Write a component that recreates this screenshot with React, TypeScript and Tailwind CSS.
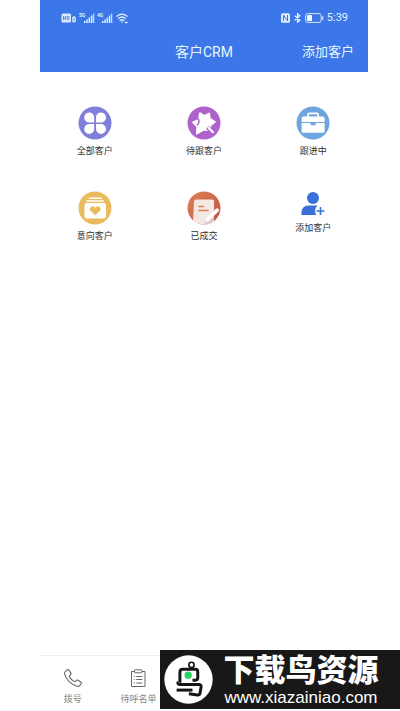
import React from 'react';

const CloverIcon = () => (
  <svg viewBox="0 0 34 34" className="h-[34px] w-[34px]">
    <circle cx="17" cy="17" r="16.5" fill="#7f7edb" />
    <g fill="#fff">
      <path d="M16.2 16.4h-4.6a5 5 0 1 1 4.6-5z" />
      <path d="M18 16.4h4.6a5 5 0 1 0-4.6-5z" />
      <path d="M16.2 18h-4.6a5 5 0 1 0 4.6 5z" />
      <path d="M18 18h4.6a5 5 0 1 1-4.6 5z" />
    </g>
  </svg>
);

const StarIcon = () => (
  <svg viewBox="0 0 34 34" className="h-[34px] w-[34px]">
    <circle cx="17" cy="17" r="16.5" fill="#ae62cc" />
    <path
      d="M13 7l4.300 2.800L22.300 7.400l.6 5.300 5 3.300-4.200 3-1 5.500-6-.8-7 4.200.5-7.200-4.300-4.400 5.500-2.200z"
      fill="#fff"
      stroke="#fff"
      strokeWidth="1.600"
      strokeLinejoin="round"
    />
    <path d="M10.500 12q3 3 0 7" fill="none" stroke="#ae62cc" strokeWidth="1.500" strokeLinecap="round" />
    <path d="M20.500 21.500l7 6.500" stroke="#ae62cc" strokeWidth="4.200" />
    <path d="M21.800 22l4.200 4.200" stroke="#fff" strokeWidth="2.200" strokeLinecap="round" />
  </svg>
);

const BriefcaseIcon = () => (
  <svg viewBox="0 0 34 34" className="h-[34px] w-[34px]">
    <circle cx="17" cy="17" r="16.5" fill="#6fa5df" />
    <path d="M12 11V9a1.600 1.600 0 0 1 1.600-1.600h7A1.600 1.600 0 0 1 22.200 9v2" fill="none" stroke="#fff" strokeWidth="1.700" />
    <path d="M7.600 10.500h19a2 2 0 0 1 2 2V16H5.600v-3.500a2 2 0 0 1 2-2z" fill="#fff" />
    <path d="M5.600 17h9v2.200h5V17h9v8.200a1.600 1.600 0 0 1-1.600 1.600H7.200a1.600 1.600 0 0 1-1.600-1.600z" fill="#fff" />
    <path d="M15.500 16h3.200v2.300h-3.200z" fill="#6fa5df" />
  </svg>
);

const HeartCardIcon = () => (
  <svg viewBox="0 0 34 34" className="h-[34px] w-[34px]">
    <circle cx="17" cy="17" r="16.5" fill="#e9bb5e" />
    <path d="M11.500 7.300h12M9 10h16.500" stroke="#fff" strokeWidth="1.500" strokeLinecap="round" />
    <rect x="6.500" y="12" width="21.500" height="15.500" rx="2" fill="#fff" />
    <path
      d="M17.200 24.300l-4.500-4.200a2.700 2.700 0 0 1 0-3.900 2.800 2.800 0 0 1 3.900 0l.6.6.6-.6a2.800 2.800 0 0 1 3.900 0 2.700 2.700 0 0 1 0 3.900z"
      fill="#e9bb5e"
    />
  </svg>
);

const ContractIcon = () => (
  <svg viewBox="0 0 34 34" className="h-[34px] w-[34px]">
    <defs>
      <linearGradient id="deal" x1="0" y1="0" x2="1" y2="1">
        <stop offset="0" stopColor="#df8150" />
        <stop offset="1" stopColor="#bd5347" />
      </linearGradient>
      <clipPath id="dealClip">
        <circle cx="17" cy="17" r="16.5" />
      </clipPath>
    </defs>
    <g clipPath="url(#dealClip)">
      <rect width="34" height="34" fill="url(#deal)" />
      <path d="M9 8.500h16a2 2 0 0 1 2 2v21a3 3 0 0 1-3 2.500H10a4 4 0 0 1-4-4l1-19.500a2 2 0 0 1 2-2z" fill="#f4e8e5" />
      <path d="M20 28l7-6v9l-3 3h-7z" fill="#dccdca" />
      <path d="M12 15.500h4.500M12 19.500h9" stroke="#df7c52" strokeWidth="1.500" strokeLinecap="round" />
    </g>
    <path d="M20.200 28.500l10-9.300" stroke="#fff" strokeWidth="3.800" strokeLinecap="round" />
  </svg>
);

const AddUserIcon = () => (
  <svg viewBox="0 0 26 26" className="h-[26px] w-[26px]" fill="#3a70d8">
    <circle cx="13" cy="7" r="6" />
    <path d="M1.500 24v-3.500A6.500 6.500 0 0 1 8 14.500h9.500q-2.500 2.500-2.500 5t1.300 4.500z" />
    <path d="M20.500 16v8M16.500 20h8" stroke="#3a70d8" strokeWidth="1.600" />
  </svg>
);

const Signal = ({ label }: { label: string }) => (
  <svg viewBox="0 0 16 12" className="h-3 w-4" fill="#e2f3ff">
    <text x="0" y="4.500" fontSize="5" fontFamily="Roboto, sans-serif" fontWeight="700">{label}</text>
    <path d="M5 9h1.500v2H5zM7.300 7.500h1.500V11H7.300zM9.600 5.500h1.500V11H9.600zM11.900 3.500h1.500V11h-1.500zM14.200 1.500h1V11h-1z" />
  </svg>
);

const StatusBar = () => (
  <div className="flex h-9 items-center justify-between pl-[21px] pr-5">
    <div className="flex items-center gap-[2px]">
      <svg viewBox="0 0 16 10" className="h-[10px] w-4">
        <rect x=".5" y=".5" width="9.500" height="9" rx="1.500" fill="#d9edff" />
        <path d="M2.500 3v4M2.500 5h2M4.500 3v4M6.300 3.200v3.600h.5q1.400 0 1.400-1.800T6.800 3.200z" fill="none" stroke="#3b77e6" strokeWidth=".8" />
        <rect x="11.200" y="3.200" width="3.600" height="6.300" rx="1.600" fill="#d9edff" />
        <path d="M13 5v3" stroke="#3b77e6" strokeWidth=".8" />
      </svg>
      <Signal label="5G" />
      <Signal label="4G" />
      <svg viewBox="0 0 14 12" className="h-3 w-[14px]" fill="none" stroke="#e2f3ff" strokeWidth="1.300" strokeLinecap="round">
        <path d="M2 4.200q5-4.200 10 0M3.600 6.400q3.400-2.800 6.800 0M5.200 8.500q1.800-1.500 3.600 0" />
        <circle cx="7" cy="10.200" r=".7" fill="#e2f3ff" stroke="none" />
        <path d="M10.500 10.500h1.500" />
      </svg>
    </div>
    <div className="flex items-center gap-[3px]">
      <svg viewBox="0 0 9 10" className="h-[10px] w-[9px]">
        <rect width="9" height="9.500" y=".3" rx="1.500" fill="#d9edff" />
        <path d="M2.500 8V2.200l4 5.600V2" fill="none" stroke="#3b77e6" strokeWidth="1" />
      </svg>
      <svg viewBox="0 0 9 10" className="h-[10px] w-[9px]" fill="none" stroke="#e6f5ff" strokeWidth="1.200">
        <path d="M1.800 2.800l5 4.400L4.500 9.300V.7l2.300 2.100-5 4.400" />
      </svg>
      <svg viewBox="0 0 19 10" className="h-[10px] w-[19px]">
        <rect x=".6" y=".6" width="15.500" height="8.800" rx="2" fill="none" stroke="#d9edff" strokeWidth="1" />
        <rect x="2" y="2" width="5" height="6" rx=".8" fill="#f4fbff" />
        <path d="M17.700 3.200v3.600" stroke="#d9edff" strokeWidth="1.200" />
      </svg>
      <span className="font-['Roboto',sans-serif] text-[11px] leading-4 text-[#e6f5ff]">5:39</span>
    </div>
  </div>
);

const PhoneIcon = () => (
  <svg viewBox="0 0 20 20" className="h-5 w-5" fill="none" stroke="#666" strokeWidth="1.100" strokeLinejoin="round">
    <path d="M2.200 3.600l2-1.800q1-.7 1.700.3l2 3q.6 1-.3 1.700l-1 .8q-.6.600 0 1.500 1.700 2.600 4.300 4.300.9.600 1.500 0l.9-1q.8-.8 1.700-.2l3 2q.9.700.2 1.600l-1.600 1.900q-.9.900-2.400.6-4.300-1-8-4.700T1.600 5.900q-.3-1.400.6-2.300z" />
  </svg>
);

const ClipboardIcon = () => (
  <svg viewBox="0 0 20 20" className="h-5 w-5" fill="none" stroke="#666" strokeWidth="1">
    <path d="M6.500 3.500h-3v15h13.500v-15h-3" />
    <rect x="6.500" y="1.800" width="7.500" height="3" rx=".6" />
    <path d="M5.800 8.500h1M8.300 8.500h6M5.800 11.500h1M8.300 11.500h6M5.800 15h1M8.300 15h6" />
  </svg>
);

const BirdLogo = () => (
  <svg viewBox="0 0 148 148" className="h-[49px] w-[49px] shrink-0">
    <circle cx="74" cy="74" r="73" fill="#fff" />
    <g fill="none" stroke="#151515" strokeWidth="9" strokeLinejoin="round">
      <circle cx="83" cy="30" r="8" strokeWidth="5" />
      <path d="M48 84V52q0-9 9-9h38q7 0 7 8v18q0 7-7 7h-9" />
      <path d="M43 84h-1q0 5 6 5h57q8 0 7 8l-3 17q-1 8-8 7l-26-4" />
      <path d="M38 106h48" />
    </g>
    <circle cx="73" cy="61" r="11" fill="#2bd35c" />
  </svg>
);

const menu = [
  { label: '全部客户', icon: CloverIcon },
  { label: '待跟客户', icon: StarIcon },
  { label: '跟进中', icon: BriefcaseIcon },
  { label: '意向客户', icon: HeartCardIcon },
  { label: '已成交', icon: ContractIcon },
  { label: '添加客户', icon: AddUserIcon }
];

const tabs = [
  { label: '拨号', icon: PhoneIcon },
  { label: '待呼名单', icon: ClipboardIcon }
];

const App: React.FC = () => {
  return (
    <div className="relative min-h-screen bg-white font-['Roboto','Noto_Sans_CJK_SC',sans-serif]">
      <div className="ml-10 mr-8 flex min-h-screen flex-col">
        <header className="h-[72px] bg-[#3b77e8] text-[#e9f6ff]">
          <StatusBar />
          <div className="grid grid-cols-3 items-center pt-[6px]">
            <h1 className="col-start-2 text-center text-sm leading-5">客户CRM</h1>
            <button type="button" className="justify-self-end pr-[14px] text-[13px] leading-5">添加客户</button>
          </div>
        </header>

        <main className="grid flex-1 grid-cols-3 content-start gap-y-[31px] pt-[34px]">
          {menu.map((item) => (
            <button key={item.label} type="button" className="flex flex-col items-center gap-[2px] text-[9px] leading-[18px] text-[#333]">
              <item.icon />
              <span>{item.label}</span>
            </button>
          ))}
        </main>

        <nav className="flex h-14 border-t border-[#eee]">
          {tabs.map((tab) => (
            <button key={tab.label} type="button" className="flex w-1/5 flex-col items-center gap-[2px] pt-3 text-[9px] leading-[18px] text-[#888]">
              <tab.icon />
              <span className="whitespace-nowrap">{tab.label}</span>
            </button>
          ))}
        </nav>
      </div>

      {/* Site badge over the bottom bar */}
      <div className="absolute bottom-[2px] right-0 flex h-[59px] w-60 items-center gap-1 bg-[#181818] pl-1 text-white">
        <BirdLogo />
        <div className="w-[168px] text-center">
          <div className="font-['Noto_Sans_CJK_SC',sans-serif] text-[31px] font-black leading-8">下载鸟资源</div>
          <div className="pt-1 font-['Liberation_Sans',sans-serif] text-[17px] leading-5">www.xiazainiao.com</div>
        </div>
      </div>
    </div>
  );
};

export default App;
